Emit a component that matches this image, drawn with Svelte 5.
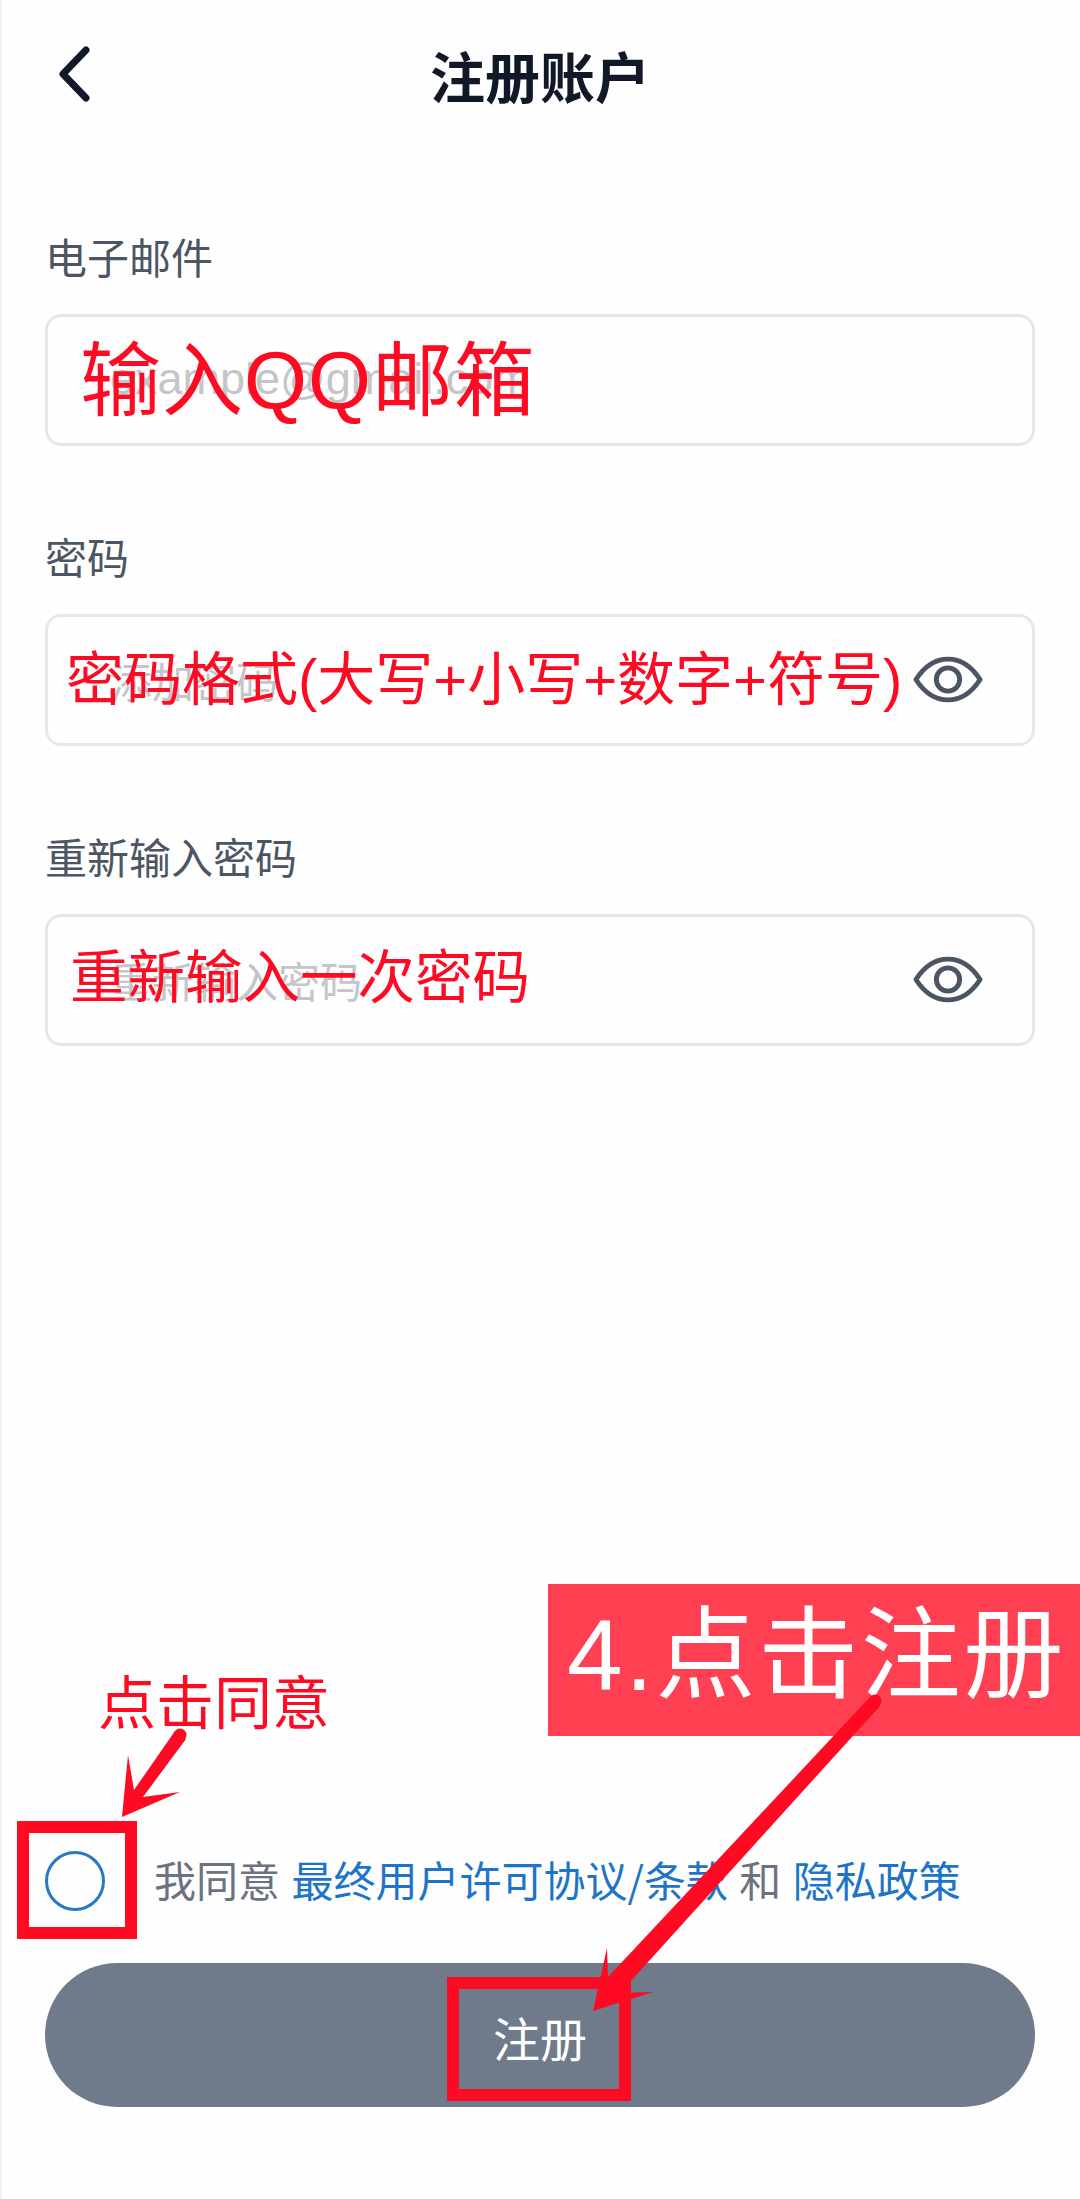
<script>
  const fields = [
    { label: '电子邮件', placeholder: 'example@gmail.com', phClass: 'ph-latin', note: '输入QQ邮箱', noteClass: 'note-email', eye: false },
    { label: '密码', placeholder: '添加密码', phClass: '', note: '密码格式(大写+小写+数字+符号)', noteClass: 'note-pass', eye: true },
    { label: '重新输入密码', placeholder: '重新输入密码', phClass: '', note: '重新输入一次密码', noteClass: 'note-again', eye: true }
  ];
</script>

<div class="page">
  <header class="header">
    <svg class="back" viewBox="0 0 40 60" width="40" height="60" aria-hidden="true">
      <path d="M30 6 L7 30 L30 54" fill="none" stroke="#111827" stroke-width="7" stroke-linecap="round" stroke-linejoin="round" />
    </svg>
    <h1 class="title">注册账户</h1>
  </header>

  <div class="form">
    {#each fields as f}
      <section class="field">
        <div class="label">{f.label}</div>
        <div class="input">
          <span class="placeholder {f.phClass}">{f.placeholder}</span>
          {#if f.eye}
            <svg class="eye" viewBox="0 0 72 48" width="70" height="47" aria-hidden="true">
              <path d="M3 24 C12 10 23 3 36 3 C49 3 60 10 69 24 C60 38 49 45 36 45 C23 45 12 38 3 24 Z" fill="none" stroke="#4b5563" stroke-width="5" stroke-linejoin="round" />
              <circle cx="36" cy="24" r="12" fill="none" stroke="#4b5563" stroke-width="5" />
            </svg>
          {/if}
          <span class="note {f.noteClass}">{f.note}</span>
        </div>
      </section>
    {/each}
  </div>

  <footer class="footer">
    <div class="agree">
      <span class="radio"></span>
      <span class="agree-text">我同意 <span class="link">最终用户许可协议/条款</span> 和 <span class="link">隐私政策</span></span>
    </div>
    <button class="submit">注册</button>
  </footer>

  <div class="banner">4.点击注册</div>
  <div class="hint">点击同意</div>
  <div class="frame frame-radio"></div>
  <div class="frame frame-submit"></div>
  <svg class="arrows" viewBox="0 0 1080 2199" width="1080" height="2199" aria-hidden="true">
    <polygon fill="#ff0a23" points="122,1817 128,1755 134,1790 175,1731 186,1739 143,1797 180,1792" />
    <circle fill="#ff0a23" cx="180" cy="1735" r="6.5" />
    <polygon fill="#ff0a23" points="593,2011 607,1948 608,1977 870,1697 880,1706 620,1993 653,1992" />
    <circle fill="#ff0a23" cx="875" cy="1701" r="6.5" />
  </svg>
</div>

<style>
  :global(body) {
    margin: 0;
    background: #fff;
  }
  .page {
    position: relative;
    box-sizing: border-box;
    width: 1080px;
    height: 2199px;
    padding: 0 45px 92px;
    display: flex;
    flex-direction: column;
    overflow: hidden;
    background: #fefefe;
    box-shadow: inset 2px 0 0 #f2f2f2;
    font-family: "Noto Sans CJK SC", "Liberation Sans", sans-serif;
  }
  .header {
    position: relative;
    box-sizing: border-box;
    height: 152px;
    padding-bottom: 4px;
    display: flex;
    align-items: center;
    justify-content: center;
    flex-shrink: 0;
  }
  .back {
    position: absolute;
    left: 11px;
    top: 44px;
  }
  .title {
    margin: 0;
    font-size: 55px;
    font-weight: 700;
    line-height: 60px;
    color: #111827;
  }
  .form {
    padding-top: 76px;
  }
  .field {
    margin-bottom: 82px;
  }
  .label {
    height: 58px;
    line-height: 56px;
    margin-bottom: 28px;
    font-size: 42px;
    color: #4b5563;
  }
  .input {
    position: relative;
    box-sizing: border-box;
    height: 132px;
    border: 3px solid #e5e7eb;
    border-radius: 16px;
    display: flex;
    align-items: center;
    justify-content: space-between;
    padding: 0 49px 0 62px;
  }
  .placeholder {
    padding-bottom: 2px;
    font-size: 42px;
    color: #c4c5c8;
  }
  .ph-latin {
    font-family: "Liberation Sans", sans-serif;
    font-size: 45px;
  }
  .eye {
    flex-shrink: 0;
    margin-bottom: 2px;
  }
  .note {
    position: absolute;
    color: #ff0a23;
    white-space: nowrap;
    line-height: 1;
    font-family: "Liberation Sans", "Noto Sans CJK SC", sans-serif;
  }
  .note-email {
    left: 32px;
    top: 24px;
    font-size: 81px;
    letter-spacing: 1px;
  }
  .note-pass {
    left: 18px;
    top: 34px;
    font-size: 58px;
  }
  .note-again {
    left: 22px;
    top: 33px;
    font-size: 57.5px;
  }
  .footer {
    margin-top: auto;
  }
  .agree {
    display: flex;
    align-items: center;
    gap: 49px;
    margin-bottom: 50px;
  }
  .radio {
    box-sizing: border-box;
    width: 60px;
    height: 60px;
    border: 3px solid #2b78c2;
    border-radius: 50%;
    flex-shrink: 0;
  }
  .agree-text {
    padding-bottom: 4px;
    font-size: 42px;
    line-height: 60px;
    color: #6b7280;
    white-space: nowrap;
    word-spacing: 2px;
  }
  .link {
    color: #1d74c8;
  }
  .submit {
    display: block;
    width: 100%;
    height: 144px;
    padding: 3px 0 0;
    border: 0;
    border-radius: 72px;
    background: #6f7a8a;
    color: #fff;
    font-family: inherit;
    font-size: 47px;
  }
  .banner {
    position: absolute;
    left: 548px;
    top: 1584px;
    width: 532px;
    height: 152px;
    background: #ff4052;
    color: #fff;
    font-family: "Liberation Sans", "Noto Sans CJK SC", sans-serif;
    font-size: 100px;
    letter-spacing: 2.6px;
    line-height: 142px;
    padding-left: 19px;
    box-sizing: border-box;
    white-space: nowrap;
  }
  .hint {
    position: absolute;
    left: 98px;
    top: 1669px;
    font-size: 58px;
    line-height: 60px;
    color: #ff0a23;
    white-space: nowrap;
  }
  .frame {
    position: absolute;
    box-sizing: border-box;
    border: 12px solid #ff0a23;
  }
  .frame-radio {
    left: 17px;
    top: 1821px;
    width: 120px;
    height: 118px;
  }
  .frame-submit {
    left: 447px;
    top: 1977px;
    width: 184px;
    height: 124px;
  }
  .arrows {
    position: absolute;
    left: 0;
    top: 0;
    pointer-events: none;
  }
</style>
